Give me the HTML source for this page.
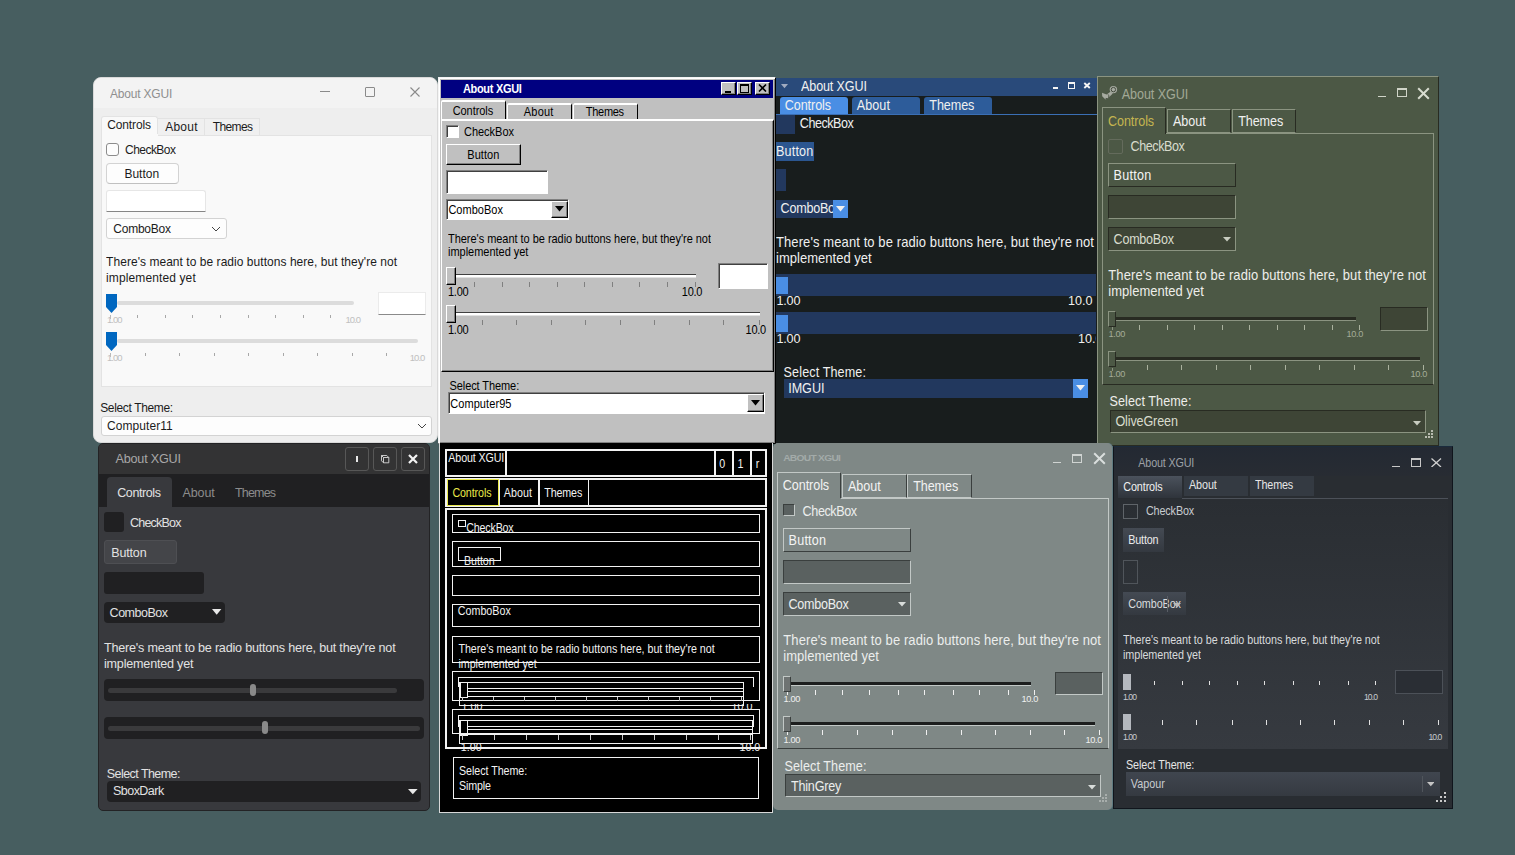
<!DOCTYPE html><html><head><meta charset="utf-8"><style>html,body{margin:0;padding:0;width:1515px;height:855px;overflow:hidden;background:#475e60}#p{position:relative;width:1515px;height:855px;overflow:hidden;font-family:"Liberation Sans",sans-serif}#p div{position:absolute;box-sizing:border-box}#p .t{white-space:nowrap}</style></head><body><div id="p"><div style="left:93px;top:77px;width:345px;height:366px;background:#eeeeee;border-radius:8px;border:1px solid #d9d9d9"></div>
<div style="left:94px;top:78px;width:343px;height:30px;background:#f3f3f3;border-radius:7px 7px 0 0"></div>
<div class="t" style="left:110.00px;top:88.00px;font-size:12px;line-height:12px;color:#8f8f8f;letter-spacing:-0.202px;transform:scaleY(1.0475);transform-origin:0 10.000px;">About XGUI</div>
<div style="left:320px;top:91px;width:10px;height:1px;background:#8a8a8a"></div>
<div style="left:365px;top:87px;width:10px;height:10px;border:1px solid #8a8a8a;border-radius:1px"></div>
<svg style="position:absolute;left:410px;top:87px;" width="10" height="10" viewBox="0 0 10 10"><path d="M0.5 0.5L9.5 9.5M9.5 0.5L0.5 9.5" stroke="#8a8a8a" stroke-width="1.1"/></svg>
<div style="left:101px;top:115.7px;width:57.4px;height:20.3px;background:#f9f9f9;border:1px solid #e3e3e3;border-bottom:none;border-radius:3px 3px 0 0"></div>
<div style="left:158.4px;top:118.3px;width:47.0px;height:17.7px;background:#f0f0f0;border:1px solid #e3e3e3;border-bottom:none;border-left:none"></div>
<div style="left:205.4px;top:118.3px;width:54.9px;height:17.7px;background:#f0f0f0;border:1px solid #e3e3e3;border-bottom:none;border-left:none"></div>
<div class="t" style="left:107.20px;top:119.00px;font-size:12px;line-height:12px;color:#1b1b1b;letter-spacing:-0.129px;transform:scaleY(1.0475);transform-origin:0 10.000px;">Controls</div>
<div class="t" style="left:165.20px;top:121.00px;font-size:12px;line-height:12px;color:#1b1b1b;letter-spacing:0.230px;transform:scaleY(1.0475);transform-origin:0 10.000px;">About</div>
<div class="t" style="left:212.80px;top:121.00px;font-size:12px;line-height:12px;color:#1b1b1b;letter-spacing:-0.644px;transform:scaleY(1.0475);transform-origin:0 10.000px;">Themes</div>
<div style="left:101px;top:135px;width:331px;height:252px;background:#f9f9f9;border:1px solid #e3e3e3"></div>
<div style="left:102px;top:134px;width:56px;height:3px;background:#f9f9f9"></div>
<div style="left:106px;top:143px;width:13px;height:13px;background:#fdfdfd;border:1px solid #8c8c8c;border-radius:3px"></div>
<div class="t" style="left:125.00px;top:144.00px;font-size:12px;line-height:12px;color:#1b1b1b;letter-spacing:-0.531px;transform:scaleY(1.0475);transform-origin:0 10.000px;">CheckBox</div>
<div style="left:106px;top:163px;width:73px;height:21px;background:#fdfdfd;border:1px solid #d3d3d3;border-bottom-color:#c0c0c0;border-radius:4px"></div>
<div class="t" style="left:124.40px;top:168.00px;font-size:12px;line-height:12px;color:#1b1b1b;letter-spacing:0.004px;transform:scaleY(1.0475);transform-origin:0 10.000px;">Button</div>
<div style="left:106px;top:190px;width:100px;height:22px;background:#ffffff;border:1px solid #e6e6e6;border-bottom:1px solid #868686;border-radius:3px 3px 0 0"></div>
<div style="left:106px;top:218px;width:121px;height:21px;background:#fdfdfd;border:1px solid #d3d3d3;border-radius:3px"></div>
<div class="t" style="left:113.30px;top:223.00px;font-size:12px;line-height:12px;color:#1b1b1b;letter-spacing:-0.234px;transform:scaleY(1.0475);transform-origin:0 10.000px;">ComboBox</div>
<svg style="position:absolute;left:211px;top:226px;" width="10" height="6" viewBox="0 0 10 6"><path d="M1 1L5 5L9 1" stroke="#444" stroke-width="1" fill="none"/></svg>
<div class="t" style="left:106.10px;top:256.00px;font-size:12px;line-height:12px;color:#1b1b1b;letter-spacing:0.041px;transform:scaleY(1.0475);transform-origin:0 10.000px;">There's meant to be radio buttons here, but they're not</div>
<div class="t" style="left:106.10px;top:272.00px;font-size:12px;line-height:12px;color:#1b1b1b;letter-spacing:0.113px;transform:scaleY(1.0475);transform-origin:0 10.000px;">implemented yet</div>
<div style="left:117px;top:301px;width:237px;height:4px;background:#dcdcdc;border-radius:2px"></div>
<svg style="position:absolute;left:106px;top:294px;" width="11" height="19" viewBox="0 0 11 19"><path d="M0 0H11V13L5.5 19L0 13Z" fill="#0067c0"/></svg>
<div style="left:137px;top:315px;width:1px;height:3px;background:#a8a8a8"></div>
<div style="left:165px;top:315px;width:1px;height:3px;background:#a8a8a8"></div>
<div style="left:192px;top:315px;width:1px;height:3px;background:#a8a8a8"></div>
<div style="left:220px;top:315px;width:1px;height:3px;background:#a8a8a8"></div>
<div style="left:248px;top:315px;width:1px;height:3px;background:#a8a8a8"></div>
<div style="left:275px;top:315px;width:1px;height:3px;background:#a8a8a8"></div>
<div style="left:303px;top:315px;width:1px;height:3px;background:#a8a8a8"></div>
<div style="left:330px;top:315px;width:1px;height:3px;background:#a8a8a8"></div>
<div style="left:110px;top:315px;width:1px;height:3.6px;background:#b8b8b8"></div>
<div class="t" style="left:107.00px;top:314.75px;font-size:9.5px;line-height:9.5px;color:#c0c0c0;letter-spacing:-0.992px;transform:scaleY(1.0291);transform-origin:0 8.250px;">1.00</div>
<div class="t" style="left:345.50px;top:314.75px;font-size:9.5px;line-height:9.5px;color:#c0c0c0;letter-spacing:-0.992px;transform:scaleY(1.0291);transform-origin:0 8.250px;">10.0</div>
<div style="left:378px;top:292px;width:48px;height:23px;background:#fff;border:1px solid #ebebeb;border-bottom:1px solid #8a8a8a"></div>
<div style="left:117px;top:339px;width:301px;height:4px;background:#dcdcdc;border-radius:2px"></div>
<svg style="position:absolute;left:106px;top:332px;" width="11" height="19" viewBox="0 0 11 19"><path d="M0 0H11V13L5.5 19L0 13Z" fill="#0067c0"/></svg>
<div style="left:145px;top:353px;width:1px;height:3px;background:#a8a8a8"></div>
<div style="left:179px;top:353px;width:1px;height:3px;background:#a8a8a8"></div>
<div style="left:214px;top:353px;width:1px;height:3px;background:#a8a8a8"></div>
<div style="left:248px;top:353px;width:1px;height:3px;background:#a8a8a8"></div>
<div style="left:283px;top:353px;width:1px;height:3px;background:#a8a8a8"></div>
<div style="left:317px;top:353px;width:1px;height:3px;background:#a8a8a8"></div>
<div style="left:352px;top:353px;width:1px;height:3px;background:#a8a8a8"></div>
<div style="left:386px;top:353px;width:1px;height:3px;background:#a8a8a8"></div>
<div style="left:110px;top:353px;width:1px;height:3.6px;background:#b8b8b8"></div>
<div class="t" style="left:107.00px;top:352.75px;font-size:9.5px;line-height:9.5px;color:#c0c0c0;letter-spacing:-0.992px;transform:scaleY(1.0291);transform-origin:0 8.250px;">1.00</div>
<div class="t" style="left:409.80px;top:352.75px;font-size:9.5px;line-height:9.5px;color:#c0c0c0;letter-spacing:-0.992px;transform:scaleY(1.0291);transform-origin:0 8.250px;">10.0</div>
<div class="t" style="left:100.20px;top:402.00px;font-size:12px;line-height:12px;color:#1b1b1b;letter-spacing:-0.347px;transform:scaleY(1.0475);transform-origin:0 10.000px;">Select Theme:</div>
<div style="left:101px;top:416px;width:331px;height:20px;background:#fdfdfd;border:1px solid #d3d3d3;border-radius:3px"></div>
<div class="t" style="left:107.00px;top:420.00px;font-size:12px;line-height:12px;color:#1b1b1b;letter-spacing:0.071px;transform:scaleY(1.0475);transform-origin:0 10.000px;">Computer11</div>
<svg style="position:absolute;left:417px;top:423px;" width="10" height="6" viewBox="0 0 10 6"><path d="M1 1L5 5L9 1" stroke="#444" stroke-width="1" fill="none"/></svg>
<div style="left:438px;top:77px;width:338px;height:367px;background:#c0c0c0;border:1px solid;border-color:#f4f4f4 #000 #000 #f4f4f4;box-shadow:inset 1px 1px #fff,inset -1px -1px #808080"></div>
<div style="left:441px;top:80px;width:332px;height:18px;background:#000080"></div>
<div class="t" style="left:462.90px;top:83.50px;font-size:11px;line-height:11px;color:#fff;font-weight:bold;letter-spacing:-0.301px;transform:scaleY(1.1427);transform-origin:0 9.500px;">About XGUI</div>
<div style="left:721px;top:82px;width:15px;height:13px;background:#c0c0c0;border:1px solid;border-color:#fff #000 #000 #fff;box-shadow:inset -1px -1px #808080"></div>
<div style="left:737px;top:82px;width:15px;height:13px;background:#c0c0c0;border:1px solid;border-color:#fff #000 #000 #fff;box-shadow:inset -1px -1px #808080"></div>
<div style="left:755px;top:82px;width:15px;height:13px;background:#c0c0c0;border:1px solid;border-color:#fff #000 #000 #fff;box-shadow:inset -1px -1px #808080"></div>
<div style="left:725px;top:91px;width:6px;height:2px;background:#000"></div>
<div style="left:740px;top:84px;width:9px;height:9px;border:1px solid #000;border-top-width:2px"></div>
<svg style="position:absolute;left:758px;top:84px;" width="9" height="8" viewBox="0 0 9 8"><path d="M1 0.5L8 7.5M8 0.5L1 7.5" stroke="#000" stroke-width="1.6"/></svg>
<div style="left:441px;top:100px;width:65px;height:19px;background:#c0c0c0;border-top:2px solid #fff;border-left:1px solid #fff;border-right:1px solid #000;border-radius:2px 2px 0 0"></div>
<div style="left:507px;top:102.6px;width:65px;height:16.4px;background:#c0c0c0;border-top:2px solid #fff;border-left:1px solid #fff;border-right:1px solid #000;border-radius:2px 2px 0 0"></div>
<div style="left:573px;top:102.6px;width:65px;height:16.4px;background:#c0c0c0;border-top:2px solid #fff;border-left:1px solid #fff;border-right:1px solid #000;border-radius:2px 2px 0 0"></div>
<div class="t" style="left:452.70px;top:105.50px;font-size:11px;line-height:11px;color:#000;letter-spacing:-0.068px;transform:scaleY(1.1427);transform-origin:0 9.500px;">Controls</div>
<div class="t" style="left:523.80px;top:106.50px;font-size:11px;line-height:11px;color:#000;letter-spacing:0.209px;transform:scaleY(1.1427);transform-origin:0 9.500px;">About</div>
<div class="t" style="left:585.80px;top:106.50px;font-size:11px;line-height:11px;color:#000;letter-spacing:-0.282px;transform:scaleY(1.1427);transform-origin:0 9.500px;">Themes</div>
<div style="left:441px;top:119px;width:333px;height:253px;border-top:2px solid #fff;border-left:1px solid #fff;border-bottom:1px solid #000;border-right:1px solid #000;box-shadow:inset -1px -1px #808080"></div>
<div style="left:446px;top:125px;width:13px;height:13px;background:#fff;border:1px solid;border-color:#808080 #fff #fff #808080;box-shadow:inset 1px 1px #404040"></div>
<div class="t" style="left:464.00px;top:126.50px;font-size:11px;line-height:11px;color:#000;letter-spacing:-0.023px;transform:scaleY(1.1427);transform-origin:0 9.500px;">CheckBox</div>
<div style="left:446px;top:144px;width:75px;height:21px;background:#c0c0c0;border:1px solid;border-color:#fff #000 #000 #fff;box-shadow:inset -1px -1px #808080"></div>
<div class="t" style="left:467.30px;top:149.50px;font-size:11px;line-height:11px;color:#000;letter-spacing:0.042px;transform:scaleY(1.1427);transform-origin:0 9.500px;">Button</div>
<div style="left:446px;top:170px;width:102px;height:24px;background:#fff;border:1px solid;border-color:#808080 #fff #fff #808080;box-shadow:inset 1px 1px #404040"></div>
<div style="left:446px;top:199px;width:123px;height:21px;background:#fff;border:1px solid;border-color:#808080 #fff #fff #808080;box-shadow:inset 1px 1px #404040"></div>
<div style="left:551px;top:201px;width:16.5px;height:17px;background:#c0c0c0;border:1px solid;border-color:#fff #000 #000 #fff;box-shadow:inset -1px -1px #808080"></div>
<svg style="position:absolute;left:555px;top:206px;" width="9" height="6" viewBox="0 0 9 6"><path d="M0 0H9L4.5 5.5Z" fill="#000"/></svg>
<div class="t" style="left:448.40px;top:204.50px;font-size:11px;line-height:11px;color:#000;letter-spacing:0.029px;transform:scaleY(1.1427);transform-origin:0 9.500px;">ComboBox</div>
<div class="t" style="left:448.00px;top:233.50px;font-size:11px;line-height:11px;color:#000;letter-spacing:-0.032px;transform:scaleY(1.1427);transform-origin:0 9.500px;">There's meant to be radio buttons here, but they're not</div>
<div class="t" style="left:448.00px;top:246.50px;font-size:11px;line-height:11px;color:#000;letter-spacing:-0.020px;transform:scaleY(1.1427);transform-origin:0 9.500px;">implemented yet</div>
<div style="left:456px;top:274px;width:240px;height:4px;background:#fff;border-top:1px solid #404040;border-bottom:1px solid #e0e0e0"></div>
<div style="left:446px;top:267px;width:10px;height:18px;background:#c0c0c0;border:1px solid;border-color:#fff #000 #000 #fff;box-shadow:inset -1px -1px #808080"></div>
<div style="left:474px;top:282px;width:1px;height:5px;background:#808080"></div>
<div style="left:502px;top:282px;width:1px;height:5px;background:#808080"></div>
<div style="left:529px;top:282px;width:1px;height:5px;background:#808080"></div>
<div style="left:557px;top:282px;width:1px;height:5px;background:#808080"></div>
<div style="left:584px;top:282px;width:1px;height:5px;background:#808080"></div>
<div style="left:612px;top:282px;width:1px;height:5px;background:#808080"></div>
<div style="left:639px;top:282px;width:1px;height:5px;background:#808080"></div>
<div style="left:667px;top:282px;width:1px;height:5px;background:#808080"></div>
<div style="left:694.5px;top:282px;width:1.0px;height:5px;background:#808080"></div>
<div class="t" style="left:448.00px;top:286.50px;font-size:11px;line-height:11px;color:#000;letter-spacing:-0.265px;transform:scaleY(1.1427);transform-origin:0 9.500px;">1.00</div>
<div class="t" style="left:681.80px;top:286.50px;font-size:11px;line-height:11px;color:#000;letter-spacing:-0.265px;transform:scaleY(1.1427);transform-origin:0 9.500px;">10.0</div>
<div style="left:718px;top:263px;width:50px;height:26px;background:#fff;border:1px solid;border-color:#808080 #fff #fff #808080;box-shadow:inset 1px 1px #404040"></div>
<div style="left:456px;top:312px;width:304px;height:4px;background:#fff;border-top:1px solid #404040;border-bottom:1px solid #e0e0e0"></div>
<div style="left:446px;top:305px;width:10px;height:18px;background:#c0c0c0;border:1px solid;border-color:#fff #000 #000 #fff;box-shadow:inset -1px -1px #808080"></div>
<div style="left:482px;top:320px;width:1px;height:5px;background:#808080"></div>
<div style="left:516px;top:320px;width:1px;height:5px;background:#808080"></div>
<div style="left:551px;top:320px;width:1px;height:5px;background:#808080"></div>
<div style="left:585px;top:320px;width:1px;height:5px;background:#808080"></div>
<div style="left:620px;top:320px;width:1px;height:5px;background:#808080"></div>
<div style="left:654px;top:320px;width:1px;height:5px;background:#808080"></div>
<div style="left:689px;top:320px;width:1px;height:5px;background:#808080"></div>
<div style="left:723px;top:320px;width:1px;height:5px;background:#808080"></div>
<div style="left:758.5px;top:320px;width:1.0px;height:5px;background:#808080"></div>
<div class="t" style="left:448.00px;top:324.50px;font-size:11px;line-height:11px;color:#000;letter-spacing:-0.265px;transform:scaleY(1.1427);transform-origin:0 9.500px;">1.00</div>
<div class="t" style="left:745.60px;top:324.50px;font-size:11px;line-height:11px;color:#000;letter-spacing:-0.265px;transform:scaleY(1.1427);transform-origin:0 9.500px;">10.0</div>
<div class="t" style="left:449.50px;top:380.50px;font-size:11px;line-height:11px;color:#000;letter-spacing:-0.086px;transform:scaleY(1.1427);transform-origin:0 9.500px;">Select Theme:</div>
<div style="left:448px;top:392px;width:317px;height:22px;background:#fff;border:1px solid;border-color:#808080 #fff #fff #808080;box-shadow:inset 1px 1px #404040"></div>
<div style="left:747px;top:394px;width:16.5px;height:18px;background:#c0c0c0;border:1px solid;border-color:#fff #000 #000 #fff;box-shadow:inset -1px -1px #808080"></div>
<svg style="position:absolute;left:751px;top:400px;" width="9" height="6" viewBox="0 0 9 6"><path d="M0 0H9L4.5 5.5Z" fill="#000"/></svg>
<div class="t" style="left:450.20px;top:398.50px;font-size:11px;line-height:11px;color:#000;letter-spacing:0.083px;transform:scaleY(1.1427);transform-origin:0 9.500px;">Computer95</div>
<div style="left:775.5px;top:78px;width:321.5px;height:365px;background:#181d1d"></div>
<div style="left:775.5px;top:78px;width:321.5px;height:18px;background:#294a7a"></div>
<svg style="position:absolute;left:781px;top:84px;" width="8" height="5" viewBox="0 0 8 5"><path d="M0 0H7L3.5 4.2Z" fill="#a0abc0"/></svg>
<div class="t" style="left:801.00px;top:80.70px;font-size:12.6px;line-height:12.6px;color:#f0f0f0;letter-spacing:-0.136px;transform:scaleY(1.1085);transform-origin:0 10.300px;">About XGUI</div>
<div style="left:1053px;top:87px;width:5.3px;height:2px;background:#f4f4f4"></div>
<div style="left:1068px;top:82px;width:7px;height:7px;border:1px solid #f4f4f4;border-top-width:2px"></div>
<svg style="position:absolute;left:1083px;top:82px;" width="8" height="7" viewBox="0 0 8 7"><path d="M1.3 1L6.8 6M6.8 1L1.3 6" stroke="#f4f4f4" stroke-width="1.9"/></svg>
<div style="left:780px;top:97.3px;width:68.2px;height:16.9px;background:#4a8ee4;border-radius:3px 3px 0 0"></div>
<div style="left:852px;top:97.3px;width:68px;height:16.9px;background:#2d5c9a;border-radius:3px 3px 0 0"></div>
<div style="left:924.4px;top:97.3px;width:67.9px;height:16.9px;background:#2d5c9a;border-radius:3px 3px 0 0"></div>
<div class="t" style="left:784.70px;top:99.70px;font-size:12.6px;line-height:12.6px;color:#f0f0f0;letter-spacing:-0.062px;transform:scaleY(1.1085);transform-origin:0 10.300px;">Controls</div>
<div class="t" style="left:856.70px;top:99.70px;font-size:12.6px;line-height:12.6px;color:#f0f0f0;letter-spacing:0.088px;transform:scaleY(1.1085);transform-origin:0 10.300px;">About</div>
<div class="t" style="left:929.30px;top:99.70px;font-size:12.6px;line-height:12.6px;color:#f0f0f0;letter-spacing:-0.077px;transform:scaleY(1.1085);transform-origin:0 10.300px;">Themes</div>
<div style="left:775.5px;top:114.2px;width:321.5px;height:1.2px;background:#3a6fb5"></div>
<div style="left:775.7px;top:115.4px;width:19.3px;height:18.6px;background:#22385e"></div>
<div class="t" style="left:799.80px;top:117.70px;font-size:12.6px;line-height:12.6px;color:#f0f0f0;letter-spacing:-0.479px;transform:scaleY(1.1085);transform-origin:0 10.300px;">CheckBox</div>
<div style="left:775.7px;top:142px;width:38.3px;height:19px;background:#2b5690"></div>
<div class="t" style="left:776.00px;top:145.70px;font-size:12.6px;line-height:12.6px;color:#f0f0f0;letter-spacing:0.177px;transform:scaleY(1.1085);transform-origin:0 10.300px;">Button</div>
<div style="left:775.7px;top:169px;width:10.3px;height:22px;background:#22385e"></div>
<div style="left:775.7px;top:200px;width:72.3px;height:18px;background:#22385e"></div>
<div class="t" style="left:780.60px;top:202.70px;font-size:12.6px;line-height:12.6px;color:#f0f0f0;letter-spacing:-0.258px;transform:scaleY(1.1085);transform-origin:0 10.300px;">ComboBox</div>
<div style="left:833px;top:200px;width:15px;height:18px;background:#4a8ee4"></div>
<svg style="position:absolute;left:836px;top:206px;" width="9" height="6" viewBox="0 0 9 6"><path d="M0 0H9L4.5 5.5Z" fill="#f0f0f0"/></svg>
<div class="t" style="left:776.00px;top:236.00px;font-size:13px;line-height:13px;color:#f0f0f0;letter-spacing:0.095px;transform:scaleY(1.0743);transform-origin:0 11.000px;">There's meant to be radio buttons here, but they're not</div>
<div class="t" style="left:776.00px;top:252.00px;font-size:13px;line-height:13px;color:#f0f0f0;letter-spacing:0.025px;transform:scaleY(1.0743);transform-origin:0 11.000px;">implemented yet</div>
<div style="left:775.7px;top:274px;width:320.6px;height:21.7px;background:#22385e"></div>
<div style="left:775.7px;top:277px;width:12.5px;height:17px;background:#4a8ee4"></div>
<div style="left:775.7px;top:312px;width:320.6px;height:21.7px;background:#22385e"></div>
<div style="left:775.7px;top:315px;width:12.5px;height:17px;background:#4a8ee4"></div>
<div class="t" style="left:776.50px;top:294.70px;font-size:12.6px;line-height:12.6px;color:#f0f0f0;letter-spacing:-0.202px;transform:scaleY(0.9976);transform-origin:0 10.300px;">1.00</div>
<div class="t" style="left:1068.00px;top:294.70px;font-size:12.6px;line-height:12.6px;color:#f0f0f0;letter-spacing:0.031px;transform:scaleY(0.9976);transform-origin:0 10.300px;">10.0</div>
<div class="t" style="left:776.50px;top:332.70px;font-size:12.6px;line-height:12.6px;color:#f0f0f0;letter-spacing:-0.202px;transform:scaleY(0.9976);transform-origin:0 10.300px;">1.00</div>
<div style="left:1068px;top:330px;width:27.5px;height:16px;overflow:hidden"><div style="left:-1068px;top:-330px;width:1515px;height:855px">
<div class="t" style="left:1078.00px;top:332.70px;font-size:12.6px;line-height:12.6px;color:#f0f0f0;letter-spacing:0.031px;transform:scaleY(0.9976);transform-origin:0 10.300px;">10.0</div>
</div></div>
<div class="t" style="left:783.60px;top:366.70px;font-size:12.6px;line-height:12.6px;color:#f0f0f0;letter-spacing:0.115px;transform:scaleY(1.1085);transform-origin:0 10.300px;">Select Theme:</div>
<div style="left:784px;top:379px;width:303.7px;height:18.8px;background:#22385e"></div>
<div style="left:1073px;top:379px;width:14.7px;height:18.8px;background:#4a8ee4"></div>
<svg style="position:absolute;left:1076px;top:385px;" width="9" height="6" viewBox="0 0 9 6"><path d="M0 0H9L4.5 5.5Z" fill="#f0f0f0"/></svg>
<div class="t" style="left:788.20px;top:382.70px;font-size:12.6px;line-height:12.6px;color:#f0f0f0;letter-spacing:-0.029px;transform:scaleY(1.1085);transform-origin:0 10.300px;">IMGUI</div>
<div style="left:1097px;top:76px;width:342px;height:370px;background:#4c5845;border-top:1px solid #8b9481;border-left:1px solid #8b9481;border-right:1px solid #282b22;border-bottom:1px solid #282b22"></div>
<svg style="position:absolute;left:1098px;top:82px;" width="24" height="22" viewBox="0 0 24 22"><circle cx="15.4" cy="7.6" r="3.7" fill="#a6aaa0"/><circle cx="15.4" cy="7.6" r="2.2" fill="none" stroke="#454d3f" stroke-width="1"/><path d="M4 10.8L8.6 12.4L12.4 9.8L14.8 11.4L11.2 15Q9.8 17.6 7.2 17.2L4.2 14.2Z" fill="#a6aaa0"/><path d="M9.6 12.2A2.2 2.2 0 0 1 7.6 16.4" stroke="#454d3f" stroke-width="0.9" fill="none"/></svg>
<div class="t" style="left:1121.80px;top:88.70px;font-size:12.6px;line-height:12.6px;color:#a2a896;letter-spacing:-0.091px;transform:scaleY(1.1085);transform-origin:0 10.300px;">About XGUI</div>
<div style="left:1378px;top:96px;width:8px;height:1.3px;background:#d0d4c8"></div>
<div style="left:1397px;top:88px;width:10px;height:9px;border:1px solid #d0d4c8;border-top-width:2px"></div>
<svg style="position:absolute;left:1417px;top:86.5px;" width="13" height="13" viewBox="0 0 13 13"><path d="M1.2 1.2L11.8 11.8M11.8 1.2L1.2 11.8" stroke="#d8dcd0" stroke-width="2"/></svg>
<div style="left:1102px;top:107px;width:64px;height:27px;border-top:1px solid #8b9481;border-left:1px solid #8b9481;border-right:1px solid #282b22;background:#4c5845"></div>
<div style="left:1166.5px;top:109.3px;width:64.5px;height:23.7px;border:1px solid #8b9481;border-right-color:#282b22"></div>
<div style="left:1231.5px;top:109.3px;width:64.5px;height:23.7px;border:1px solid #8b9481;border-right-color:#282b22"></div>
<div class="t" style="left:1108.00px;top:115.70px;font-size:12.6px;line-height:12.6px;color:#c4b550;letter-spacing:-0.105px;transform:scaleY(1.1085);transform-origin:0 10.300px;">Controls</div>
<div class="t" style="left:1172.90px;top:115.70px;font-size:12.6px;line-height:12.6px;color:#f0f0f0;letter-spacing:0.013px;transform:scaleY(1.1085);transform-origin:0 10.300px;">About</div>
<div class="t" style="left:1238.20px;top:115.70px;font-size:12.6px;line-height:12.6px;color:#f0f0f0;letter-spacing:-0.097px;transform:scaleY(1.1085);transform-origin:0 10.300px;">Themes</div>
<div style="left:1102px;top:133px;width:332px;height:252px;border-left:1px solid #8b9481;border-bottom:1px solid #282b22;border-right:1px solid #8b9481"></div>
<div style="left:1166px;top:133px;width:268px;height:1.2px;background:#8b9481"></div>
<div style="left:1108px;top:139.2px;width:15px;height:14.5px;border:1px solid #646b5c;border-radius:2px"></div>
<div class="t" style="left:1130.60px;top:140.70px;font-size:12.6px;line-height:12.6px;color:#d8dccd;letter-spacing:-0.451px;transform:scaleY(1.1085);transform-origin:0 10.300px;">CheckBox</div>
<div style="left:1108px;top:163px;width:128px;height:23.6px;border:1px solid;border-color:#8b9481 #282b22 #282b22 #8b9481"></div>
<div class="t" style="left:1113.60px;top:169.70px;font-size:12.6px;line-height:12.6px;color:#f4f4f4;letter-spacing:0.237px;transform:scaleY(1.1085);transform-origin:0 10.300px;">Button</div>
<div style="left:1108px;top:195px;width:128px;height:23.8px;background:#3e4536;border:1px solid;border-color:#282b22 #8b9481 #8b9481 #282b22"></div>
<div style="left:1108px;top:227px;width:128px;height:23.8px;background:#3e4536;border:1px solid;border-color:#282b22 #8b9481 #8b9481 #282b22"></div>
<div class="t" style="left:1113.60px;top:233.70px;font-size:12.6px;line-height:12.6px;color:#d8dccd;letter-spacing:-0.272px;transform:scaleY(1.1085);transform-origin:0 10.300px;">ComboBox</div>
<svg style="position:absolute;left:1222.5px;top:237px;" width="8" height="5" viewBox="0 0 8 5"><path d="M0 0H8L4 4.5Z" fill="#c8ccc0"/></svg>
<div class="t" style="left:1108.30px;top:269.00px;font-size:13px;line-height:13px;color:#eeeeea;letter-spacing:0.090px;transform:scaleY(1.0743);transform-origin:0 11.000px;">There's meant to be radio buttons here, but they're not</div>
<div class="t" style="left:1108.30px;top:285.00px;font-size:13px;line-height:13px;color:#eeeeea;letter-spacing:0.010px;transform:scaleY(1.0743);transform-origin:0 11.000px;">implemented yet</div>
<div style="left:1116px;top:316.8px;width:240px;height:3.0px;background:#282b22"></div>
<div style="left:1116px;top:319.8px;width:240px;height:1.2px;background:#8b9481"></div>
<div style="left:1108px;top:310.5px;width:8px;height:16.0px;background:#4c5845;border:1px solid;border-color:#8b9481 #282b22 #282b22 #8b9481"></div>
<div style="left:1112px;top:327.0px;width:1px;height:3.0px;background:#8b9481"></div>
<div style="left:1139px;top:324.8px;width:1px;height:5.2px;background:#aab29e"></div>
<div style="left:1167px;top:324.8px;width:1px;height:5.2px;background:#aab29e"></div>
<div style="left:1194px;top:324.8px;width:1px;height:5.2px;background:#aab29e"></div>
<div style="left:1222px;top:324.8px;width:1px;height:5.2px;background:#aab29e"></div>
<div style="left:1249px;top:324.8px;width:1px;height:5.2px;background:#aab29e"></div>
<div style="left:1277px;top:324.8px;width:1px;height:5.2px;background:#aab29e"></div>
<div style="left:1304px;top:324.8px;width:1px;height:5.2px;background:#aab29e"></div>
<div style="left:1332px;top:324.8px;width:1px;height:5.2px;background:#aab29e"></div>
<div style="left:1359px;top:324.8px;width:1px;height:5.2px;background:#aab29e"></div>
<div class="t" style="left:1108.60px;top:330.40px;font-size:9.2px;line-height:9.2px;color:#a4ac98;letter-spacing:-0.398px;transform:scaleY(1.0627);transform-origin:0 7.600px;">1.00</div>
<div class="t" style="left:1346.50px;top:330.40px;font-size:9.2px;line-height:9.2px;color:#a4ac98;letter-spacing:-0.331px;transform:scaleY(1.0627);transform-origin:0 7.600px;">10.0</div>
<div style="left:1380px;top:307px;width:48px;height:24px;background:#3e4536;border:1px solid;border-color:#282b22 #8b9481 #8b9481 #282b22"></div>
<div style="left:1116px;top:357.3px;width:304px;height:3.0px;background:#282b22"></div>
<div style="left:1116px;top:360.3px;width:304px;height:1.2px;background:#8b9481"></div>
<div style="left:1108px;top:351px;width:8px;height:16px;background:#4c5845;border:1px solid;border-color:#8b9481 #282b22 #282b22 #8b9481"></div>
<div style="left:1112px;top:367.5px;width:1px;height:3.0px;background:#8b9481"></div>
<div style="left:1147px;top:365.3px;width:1px;height:5.2px;background:#aab29e"></div>
<div style="left:1181px;top:365.3px;width:1px;height:5.2px;background:#aab29e"></div>
<div style="left:1216px;top:365.3px;width:1px;height:5.2px;background:#aab29e"></div>
<div style="left:1250px;top:365.3px;width:1px;height:5.2px;background:#aab29e"></div>
<div style="left:1285px;top:365.3px;width:1px;height:5.2px;background:#aab29e"></div>
<div style="left:1319px;top:365.3px;width:1px;height:5.2px;background:#aab29e"></div>
<div style="left:1354px;top:365.3px;width:1px;height:5.2px;background:#aab29e"></div>
<div style="left:1388px;top:365.3px;width:1px;height:5.2px;background:#aab29e"></div>
<div style="left:1423px;top:365.3px;width:1px;height:5.2px;background:#aab29e"></div>
<div class="t" style="left:1108.60px;top:370.40px;font-size:9.2px;line-height:9.2px;color:#a4ac98;letter-spacing:-0.398px;transform:scaleY(1.0627);transform-origin:0 7.600px;">1.00</div>
<div class="t" style="left:1410.40px;top:370.40px;font-size:9.2px;line-height:9.2px;color:#a4ac98;letter-spacing:-0.331px;transform:scaleY(1.0627);transform-origin:0 7.600px;">10.0</div>
<div class="t" style="left:1109.50px;top:395.70px;font-size:12.6px;line-height:12.6px;color:#eeeeea;letter-spacing:0.082px;transform:scaleY(1.1085);transform-origin:0 10.300px;">Select Theme:</div>
<div style="left:1110px;top:410px;width:316px;height:23px;background:#3e4536;border:1px solid;border-color:#282b22 #8b9481 #8b9481 #282b22"></div>
<div class="t" style="left:1115.40px;top:415.70px;font-size:12.6px;line-height:12.6px;color:#d8dccd;letter-spacing:-0.128px;transform:scaleY(1.1085);transform-origin:0 10.300px;">OliveGreen</div>
<svg style="position:absolute;left:1412.5px;top:421px;" width="8" height="5" viewBox="0 0 8 5"><path d="M0 0H8L4 4.5Z" fill="#c8ccc0"/></svg>
<div style="left:1431px;top:430px;width:2px;height:2px;background:#b8bcb0"></div>
<div style="left:1428px;top:433px;width:2px;height:2px;background:#b8bcb0"></div>
<div style="left:1431px;top:433px;width:2px;height:2px;background:#b8bcb0"></div>
<div style="left:1425px;top:436px;width:2px;height:2px;background:#b8bcb0"></div>
<div style="left:1428px;top:436px;width:2px;height:2px;background:#b8bcb0"></div>
<div style="left:1431px;top:436px;width:2px;height:2px;background:#b8bcb0"></div>
<div style="left:98px;top:443.3px;width:332px;height:367.7px;background:#38393d;border-radius:5px;border:1px solid #232325;overflow:hidden"></div>
<div style="left:99px;top:444.3px;width:330px;height:29.7px;background:#333334;border-radius:4px 4px 0 0"></div>
<div style="left:99px;top:474px;width:330px;height:33px;background:#202022"></div>
<div class="t" style="left:115.50px;top:452.50px;font-size:12.6px;line-height:12.6px;color:#a8a8a8;letter-spacing:-0.191px;">About XGUI</div>
<div style="left:345.2px;top:447.2px;width:23.5px;height:23.8px;border:1px solid #575757;border-radius:3px;background:#333334"></div>
<div style="left:373px;top:447.2px;width:23.5px;height:23.8px;border:1px solid #575757;border-radius:3px;background:#333334"></div>
<div style="left:401.2px;top:447.2px;width:23.5px;height:23.8px;border:1px solid #575757;border-radius:3px;background:#333334"></div>
<div style="left:356px;top:456px;width:2px;height:6px;background:#e8e8e8"></div>
<svg style="position:absolute;left:376px;top:450px;" width="18" height="18" viewBox="0 0 18 18"><path d="M5.5 5.5H10.8L12.8 7.5V12.8H7.5L5.5 10.8Z M5.5 5.5L7.5 7.5H12.8 M7.5 7.5V12.8" fill="none" stroke="#d8d8d8" stroke-width="0.9"/></svg>
<svg style="position:absolute;left:408px;top:454px;" width="10" height="10" viewBox="0 0 10 10"><path d="M1 1L9 9M9 1L1 9" stroke="#f4f4f4" stroke-width="2.2"/></svg>
<div style="left:106.7px;top:477.2px;width:65.3px;height:29.8px;background:#38393d;border-radius:4px 4px 0 0"></div>
<div class="t" style="left:117.20px;top:486.75px;font-size:12.5px;line-height:12.5px;color:#e2e2e2;letter-spacing:-0.395px;">Controls</div>
<div class="t" style="left:182.40px;top:486.75px;font-size:12.5px;line-height:12.5px;color:#8c8c8c;letter-spacing:-0.072px;">About</div>
<div class="t" style="left:235.00px;top:486.75px;font-size:12.5px;line-height:12.5px;color:#8c8c8c;letter-spacing:-0.825px;">Themes</div>
<div style="left:104px;top:512px;width:20px;height:20px;background:#202022;border-radius:3px"></div>
<div class="t" style="left:130.10px;top:516.85px;font-size:12.5px;line-height:12.5px;color:#e2e2e2;letter-spacing:-0.800px;">CheckBox</div>
<div style="left:104px;top:540px;width:73px;height:24px;background:#444549;border:1px solid #4e4f53;border-radius:3px"></div>
<div class="t" style="left:111.30px;top:546.75px;font-size:12.5px;line-height:12.5px;color:#e2e2e2;letter-spacing:-0.165px;">Button</div>
<div style="left:104px;top:572px;width:100px;height:22px;background:#202022;border-radius:3px"></div>
<div style="left:104px;top:602px;width:121px;height:20.6px;background:#202022;border-radius:4px"></div>
<div class="t" style="left:109.60px;top:607.25px;font-size:12.5px;line-height:12.5px;color:#e2e2e2;letter-spacing:-0.488px;">ComboBox</div>
<svg style="position:absolute;left:212.4px;top:609.4px;" width="10" height="6" viewBox="0 0 10 6"><path d="M0 0H9.4L4.7 5.8Z" fill="#e8e8e8"/></svg>
<div class="t" style="left:104.00px;top:642.00px;font-size:12.6px;line-height:12.6px;color:#e2e2e2;letter-spacing:-0.211px;">There's meant to be radio buttons here, but they're not</div>
<div class="t" style="left:104.00px;top:657.70px;font-size:12.6px;line-height:12.6px;color:#e2e2e2;letter-spacing:-0.209px;">implemented yet</div>
<div style="left:104px;top:679.2px;width:320px;height:21.5px;background:#202022;border-radius:4px"></div>
<div style="left:108px;top:687.9px;width:289px;height:5.1px;background:#3a3a3c;border-radius:3px"></div>
<div style="left:250px;top:683.6px;width:5.5px;height:12.4px;background:#8a8a8a;border-radius:3px"></div>
<div style="left:104px;top:717px;width:320px;height:21.5px;background:#202022;border-radius:4px"></div>
<div style="left:108px;top:725.7px;width:312px;height:5.1px;background:#3a3a3c;border-radius:3px"></div>
<div style="left:262px;top:721.4px;width:5.5px;height:12.4px;background:#8a8a8a;border-radius:3px"></div>
<div class="t" style="left:106.80px;top:768.15px;font-size:12.5px;line-height:12.5px;color:#e2e2e2;letter-spacing:-0.556px;">Select Theme:</div>
<div style="left:106.8px;top:781.4px;width:313.8px;height:20.6px;background:#202022;border-radius:4px"></div>
<div class="t" style="left:113.00px;top:785.25px;font-size:12.5px;line-height:12.5px;color:#e2e2e2;letter-spacing:-0.534px;">SboxDark</div>
<svg style="position:absolute;left:408px;top:789px;" width="10" height="6" viewBox="0 0 10 6"><path d="M0 0H9.6L4.8 5.3Z" fill="#e8e8e8"/></svg>
<div style="left:439px;top:443px;width:334px;height:370px;background:#000;border:1px solid #d8d8d8;border-top:none"></div>
<div style="left:445.4px;top:449px;width:321.6px;height:28.4px;border:2px solid #f2f2f2;"></div>
<div style="left:505px;top:449px;width:1.5px;height:28.4px;background:#f2f2f2"></div>
<div class="t" style="left:448.30px;top:452.65px;font-size:10.7px;line-height:10.7px;color:#f2f2f2;letter-spacing:-0.120px;transform:scaleY(1.1748);transform-origin:0 9.350px;">About XGUI</div>
<div style="left:714px;top:449px;width:2px;height:28.4px;background:#f2f2f2"></div>
<div class="t" style="left:719.20px;top:458.65px;font-size:10.7px;line-height:10.7px;color:#f2f2f2;transform:scaleY(1.1748);transform-origin:0 9.350px;">0</div>
<div style="left:732px;top:449px;width:2px;height:28.4px;background:#f2f2f2"></div>
<div class="t" style="left:737.50px;top:458.65px;font-size:10.7px;line-height:10.7px;color:#f2f2f2;transform:scaleY(1.1748);transform-origin:0 9.350px;">1</div>
<div style="left:750px;top:449px;width:2px;height:28.4px;background:#f2f2f2"></div>
<div class="t" style="left:755.80px;top:458.65px;font-size:10.7px;line-height:10.7px;color:#f2f2f2;transform:scaleY(1.1748);transform-origin:0 9.350px;">r</div>
<div style="left:445.4px;top:478px;width:321.6px;height:29px;border:2px solid #f2f2f2;"></div>
<div style="left:446.5px;top:479.2px;width:52.1px;height:26.6px;border:1.5px solid #e8e84a;"></div>
<div class="t" style="left:452.40px;top:487.65px;font-size:10.7px;line-height:10.7px;color:#e8e84a;letter-spacing:-0.094px;transform:scaleY(1.1748);transform-origin:0 9.350px;">Controls</div>
<div style="left:498.6px;top:479.2px;width:40.0px;height:26.6px;border:1.5px solid #f2f2f2;"></div>
<div class="t" style="left:503.80px;top:487.65px;font-size:10.7px;line-height:10.7px;color:#f2f2f2;letter-spacing:0.055px;transform:scaleY(1.1748);transform-origin:0 9.350px;">About</div>
<div style="left:538.6px;top:479.2px;width:50.4px;height:26.6px;border:1.5px solid #f2f2f2;"></div>
<div class="t" style="left:544.30px;top:487.65px;font-size:10.7px;line-height:10.7px;color:#f2f2f2;letter-spacing:-0.125px;transform:scaleY(1.1748);transform-origin:0 9.350px;">Themes</div>
<div style="left:445.4px;top:508.4px;width:321.6px;height:240.6px;border:2px solid #f2f2f2;"></div>
<div style="left:452.4px;top:513.7px;width:307.6px;height:18.9px;border:1.5px solid #f2f2f2;"></div>
<div style="left:458.2px;top:520.1px;width:7.6px;height:7.0px;border:1.5px solid #f2f2f2;"></div>
<div class="t" style="left:466.20px;top:522.65px;font-size:10.7px;line-height:10.7px;color:#f2f2f2;letter-spacing:-0.170px;transform:scaleY(1.1748);transform-origin:0 9.350px;">CheckBox</div>
<div style="left:452.4px;top:541.3px;width:307.6px;height:25.3px;border:1.5px solid #f2f2f2;"></div>
<div style="left:457.8px;top:547px;width:43.7px;height:14px;border:1.5px solid #f2f2f2;"></div>
<div class="t" style="left:464.00px;top:555.65px;font-size:10.7px;line-height:10.7px;color:#f2f2f2;letter-spacing:-0.045px;transform:scaleY(1.1748);transform-origin:0 9.350px;">Button</div>
<div style="left:452.4px;top:575px;width:307.6px;height:20.8px;border:1.5px solid #f2f2f2;"></div>
<div style="left:452.4px;top:604px;width:307.6px;height:22.5px;border:1.5px solid #f2f2f2;"></div>
<div class="t" style="left:457.80px;top:605.65px;font-size:10.7px;line-height:10.7px;color:#f2f2f2;letter-spacing:0.013px;transform:scaleY(1.1748);transform-origin:0 9.350px;">ComboBox</div>
<div style="left:452.4px;top:635.7px;width:307.6px;height:27.3px;border:1.5px solid #f2f2f2;"></div>
<div class="t" style="left:458.40px;top:643.65px;font-size:10.7px;line-height:10.7px;color:#f2f2f2;letter-spacing:-0.017px;transform:scaleY(1.1748);transform-origin:0 9.350px;">There's meant to be radio buttons here, but they're not</div>
<div class="t" style="left:458.40px;top:658.65px;font-size:10.7px;line-height:10.7px;color:#f2f2f2;letter-spacing:-0.006px;transform:scaleY(1.1748);transform-origin:0 9.350px;">implemented yet</div>
<div style="left:452px;top:671px;width:308px;height:30px;border:1px solid #f2f2f2;"></div>
<div style="left:458px;top:677px;width:296px;height:1px;background:#f2f2f2"></div>
<div style="left:458px;top:677px;width:1px;height:10px;background:#f2f2f2"></div>
<div style="left:753px;top:677px;width:1px;height:10px;background:#f2f2f2"></div>
<div style="left:459px;top:682px;width:285px;height:1px;background:#f2f2f2"></div>
<div style="left:459px;top:682px;width:1px;height:24px;background:#f2f2f2"></div>
<div style="left:743px;top:682px;width:1px;height:24px;background:#f2f2f2"></div>
<div style="left:467px;top:688px;width:276px;height:1px;background:#f2f2f2"></div>
<div style="left:467px;top:691px;width:276px;height:1px;background:#f2f2f2"></div>
<div style="left:467px;top:696px;width:277px;height:1px;background:#f2f2f2"></div>
<div style="left:460px;top:682px;width:8px;height:16px;border:1px solid #f2f2f2;"></div>
<div style="left:462px;top:697px;width:1px;height:4px;background:#c8c8c8"></div>
<div style="left:493px;top:697px;width:1px;height:4px;background:#c8c8c8"></div>
<div style="left:524px;top:697px;width:1px;height:4px;background:#c8c8c8"></div>
<div style="left:555px;top:697px;width:1px;height:4px;background:#c8c8c8"></div>
<div style="left:586px;top:697px;width:1px;height:4px;background:#c8c8c8"></div>
<div style="left:617px;top:697px;width:1px;height:4px;background:#c8c8c8"></div>
<div style="left:648px;top:697px;width:1px;height:4px;background:#c8c8c8"></div>
<div style="left:679px;top:697px;width:1px;height:4px;background:#c8c8c8"></div>
<div style="left:710px;top:697px;width:1px;height:4px;background:#c8c8c8"></div>
<div style="left:741px;top:697px;width:1px;height:4px;background:#c8c8c8"></div>
<div style="left:459px;top:705px;width:285px;height:1px;background:#f2f2f2"></div>
<div style="left:446px;top:704px;width:320px;height:5.7px;overflow:hidden"><div class="t" style="left:15.6px;top:-2.7px;font-size:10.7px;line-height:10.7px;color:#f2f2f2">1.00</div><div class="t" style="left:285.6px;top:-2.7px;font-size:10.7px;line-height:10.7px;color:#f2f2f2">10.0</div></div>
<div style="left:452px;top:709px;width:308px;height:25px;border:1px solid #f2f2f2;"></div>
<div style="left:458px;top:715px;width:296px;height:1px;background:#f2f2f2"></div>
<div style="left:458px;top:715px;width:1px;height:12px;background:#f2f2f2"></div>
<div style="left:753px;top:715px;width:1px;height:12px;background:#f2f2f2"></div>
<div style="left:459px;top:720px;width:294px;height:1px;background:#f2f2f2"></div>
<div style="left:459px;top:720px;width:1px;height:24px;background:#f2f2f2"></div>
<div style="left:752px;top:720px;width:1px;height:24px;background:#f2f2f2"></div>
<div style="left:467px;top:726px;width:286px;height:1px;background:#f2f2f2"></div>
<div style="left:467px;top:729px;width:286px;height:1px;background:#f2f2f2"></div>
<div style="left:459px;top:734px;width:294px;height:1px;background:#f2f2f2"></div>
<div style="left:460px;top:720px;width:8px;height:16px;border:1px solid #f2f2f2;"></div>
<div style="left:462px;top:735px;width:1px;height:5px;background:#c8c8c8"></div>
<div style="left:494px;top:735px;width:1px;height:5px;background:#c8c8c8"></div>
<div style="left:526px;top:735px;width:1px;height:5px;background:#c8c8c8"></div>
<div style="left:558px;top:735px;width:1px;height:5px;background:#c8c8c8"></div>
<div style="left:590px;top:735px;width:1px;height:5px;background:#c8c8c8"></div>
<div style="left:622px;top:735px;width:1px;height:5px;background:#c8c8c8"></div>
<div style="left:654px;top:735px;width:1px;height:5px;background:#c8c8c8"></div>
<div style="left:686px;top:735px;width:1px;height:5px;background:#c8c8c8"></div>
<div style="left:718px;top:735px;width:1px;height:5px;background:#c8c8c8"></div>
<div style="left:750px;top:735px;width:1px;height:5px;background:#c8c8c8"></div>
<div style="left:459px;top:743px;width:294px;height:1px;background:#f2f2f2"></div>
<div class="t" style="left:460.8px;top:741.5px;font-size:10.7px;line-height:10.7px;color:#f2f2f2">1.00</div>
<div class="t" style="left:739.5px;top:741.5px;font-size:10.7px;line-height:10.7px;color:#f2f2f2">10.0</div>
<div style="left:453px;top:757px;width:306px;height:42px;border:1.5px solid #f2f2f2;"></div>
<div class="t" style="left:459.00px;top:765.65px;font-size:10.7px;line-height:10.7px;color:#f2f2f2;letter-spacing:-0.042px;transform:scaleY(1.1748);transform-origin:0 9.350px;">Select Theme:</div>
<div class="t" style="left:459.00px;top:780.65px;font-size:10.7px;line-height:10.7px;color:#f2f2f2;letter-spacing:-0.138px;transform:scaleY(1.1748);transform-origin:0 9.350px;">Simple</div>
<div style="left:773.2px;top:443px;width:338.8px;height:367px;background:#7f8886;border-radius:5px;box-shadow:1px 0 0 #5f7a80"></div>
<div class="t" style="left:783.20px;top:453.40px;font-size:10.2px;line-height:10.2px;color:#a3aba9;font-weight:bold;letter-spacing:-0.695px;transform:scaleY(0.9585);transform-origin:0 8.600px;">ABOUT XGUI</div>
<div style="left:1053px;top:461.5px;width:8.3px;height:1.7px;background:#d0d4d2"></div>
<div style="left:1072px;top:454px;width:10px;height:9px;border:1px solid #d0d4d2;border-top-width:2px"></div>
<svg style="position:absolute;left:1092.5px;top:452.2px;" width="13" height="13" viewBox="0 0 13 13"><path d="M1.2 1.2L11.8 11.8M11.8 1.2L1.2 11.8" stroke="#dadedd" stroke-width="2"/></svg>
<div style="left:777.2px;top:472.1px;width:63.8px;height:26.4px;border-top:1px solid #c2c8c6;border-left:1px solid #c2c8c6;border-right:1px solid #3a3f3e;background:#7f8886"></div>
<div style="left:842px;top:474.2px;width:64.5px;height:24.3px;border:1px solid #c2c8c6;border-right-color:#3a3f3e"></div>
<div style="left:907px;top:474.2px;width:64.5px;height:24.3px;border:1px solid #c2c8c6;border-right-color:#3a3f3e"></div>
<div class="t" style="left:782.80px;top:479.70px;font-size:12.6px;line-height:12.6px;color:#f2f2f2;letter-spacing:-0.076px;transform:scaleY(1.1085);transform-origin:0 10.300px;">Controls</div>
<div class="t" style="left:847.90px;top:480.70px;font-size:12.6px;line-height:12.6px;color:#f2f2f2;letter-spacing:0.013px;transform:scaleY(1.1085);transform-origin:0 10.300px;">About</div>
<div class="t" style="left:913.20px;top:480.70px;font-size:12.6px;line-height:12.6px;color:#f2f2f2;letter-spacing:-0.097px;transform:scaleY(1.1085);transform-origin:0 10.300px;">Themes</div>
<div style="left:777.2px;top:498px;width:331.8px;height:251px;border-left:1px solid #c2c8c6;border-bottom:1px solid #3a3f3e;border-right:1px solid #c2c8c6"></div>
<div style="left:841px;top:498px;width:268px;height:1px;background:#c2c8c6"></div>
<div style="left:783.2px;top:504px;width:11.8px;height:11.8px;background:#5a6160;border:1px solid;border-color:#3a3f3e #c2c8c6 #c2c8c6 #3a3f3e"></div>
<div class="t" style="left:802.60px;top:505.70px;font-size:12.6px;line-height:12.6px;color:#eceeed;letter-spacing:-0.408px;transform:scaleY(1.1085);transform-origin:0 10.300px;">CheckBox</div>
<div style="left:783.2px;top:528px;width:127.8px;height:23.8px;border:1px solid;border-color:#c2c8c6 #3a3f3e #3a3f3e #c2c8c6"></div>
<div class="t" style="left:788.50px;top:534.70px;font-size:12.6px;line-height:12.6px;color:#f4f4f4;letter-spacing:0.237px;transform:scaleY(1.1085);transform-origin:0 10.300px;">Button</div>
<div style="left:783.2px;top:560px;width:127.8px;height:24px;background:#5a6160;border:1px solid;border-color:#3a3f3e #c2c8c6 #c2c8c6 #3a3f3e"></div>
<div style="left:783.2px;top:592px;width:127.8px;height:24px;background:#5a6160;border:1px solid;border-color:#3a3f3e #c2c8c6 #c2c8c6 #3a3f3e"></div>
<div class="t" style="left:788.50px;top:598.70px;font-size:12.6px;line-height:12.6px;color:#eceeed;letter-spacing:-0.272px;transform:scaleY(1.1085);transform-origin:0 10.300px;">ComboBox</div>
<svg style="position:absolute;left:897.7px;top:602px;" width="8" height="5" viewBox="0 0 8 5"><path d="M0 0H8L4 4.5Z" fill="#d8dcda"/></svg>
<div class="t" style="left:783.30px;top:634.00px;font-size:13px;line-height:13px;color:#eceeed;letter-spacing:0.090px;transform:scaleY(1.0743);transform-origin:0 11.000px;">There's meant to be radio buttons here, but they're not</div>
<div class="t" style="left:783.30px;top:650.00px;font-size:13px;line-height:13px;color:#eceeed;letter-spacing:0.010px;transform:scaleY(1.0743);transform-origin:0 11.000px;">implemented yet</div>
<div style="left:791px;top:681.6px;width:240px;height:3.1px;background:#1c1e1e"></div>
<div style="left:791px;top:684.7px;width:240px;height:1.4px;background:#c2c8c6"></div>
<div style="left:782.9px;top:675.8px;width:7.9px;height:15.8px;background:#6e7372;border:1px solid;border-color:#c2c8c6 #3a3f3e #3a3f3e #c2c8c6"></div>
<div style="left:787.2px;top:691.8px;width:1.0px;height:3.0px;background:#f0f0f0"></div>
<div style="left:814.5px;top:690.0px;width:1.0px;height:4.8px;background:#f0f0f0"></div>
<div style="left:842.4px;top:690.0px;width:1.0px;height:4.8px;background:#f0f0f0"></div>
<div style="left:869.4px;top:690.0px;width:1.0px;height:4.8px;background:#f0f0f0"></div>
<div style="left:897.5px;top:690.0px;width:1.0px;height:4.8px;background:#f0f0f0"></div>
<div style="left:924.4px;top:690.0px;width:1.0px;height:4.8px;background:#f0f0f0"></div>
<div style="left:952.5px;top:690.0px;width:1.0px;height:4.8px;background:#f0f0f0"></div>
<div style="left:979.4px;top:690.0px;width:1.0px;height:4.8px;background:#f0f0f0"></div>
<div style="left:1007.5px;top:690.0px;width:1.0px;height:4.8px;background:#f0f0f0"></div>
<div style="left:1034.4px;top:690.0px;width:1.0px;height:4.8px;background:#f0f0f0"></div>
<div class="t" style="left:783.60px;top:695.40px;font-size:9.2px;line-height:9.2px;color:#f0f0f0;letter-spacing:-0.398px;transform:scaleY(1.0627);transform-origin:0 7.600px;">1.00</div>
<div class="t" style="left:1021.50px;top:695.40px;font-size:9.2px;line-height:9.2px;color:#f0f0f0;letter-spacing:-0.331px;transform:scaleY(1.0627);transform-origin:0 7.600px;">10.0</div>
<div style="left:1055px;top:672px;width:48px;height:23.3px;background:#5a6160;border:1px solid;border-color:#3a3f3e #c2c8c6 #c2c8c6 #3a3f3e"></div>
<div style="left:791px;top:721.8px;width:304px;height:3.1px;background:#1c1e1e"></div>
<div style="left:791px;top:724.9px;width:304px;height:1.4px;background:#c2c8c6"></div>
<div style="left:782.9px;top:716px;width:7.9px;height:15.8px;background:#6e7372;border:1px solid;border-color:#c2c8c6 #3a3f3e #3a3f3e #c2c8c6"></div>
<div style="left:787.2px;top:732px;width:1.0px;height:3px;background:#f0f0f0"></div>
<div style="left:822px;top:730.2px;width:1px;height:4.8px;background:#f0f0f0"></div>
<div style="left:856.5px;top:730.2px;width:1.0px;height:4.8px;background:#f0f0f0"></div>
<div style="left:891.5px;top:730.2px;width:1.0px;height:4.8px;background:#f0f0f0"></div>
<div style="left:925.5px;top:730.2px;width:1.0px;height:4.8px;background:#f0f0f0"></div>
<div style="left:960.5px;top:730.2px;width:1.0px;height:4.8px;background:#f0f0f0"></div>
<div style="left:994.5px;top:730.2px;width:1.0px;height:4.8px;background:#f0f0f0"></div>
<div style="left:1029.5px;top:730.2px;width:1.0px;height:4.8px;background:#f0f0f0"></div>
<div style="left:1063.5px;top:730.2px;width:1.0px;height:4.8px;background:#f0f0f0"></div>
<div style="left:1098.5px;top:730.2px;width:1.0px;height:4.8px;background:#f0f0f0"></div>
<div class="t" style="left:783.60px;top:736.40px;font-size:9.2px;line-height:9.2px;color:#f0f0f0;letter-spacing:-0.398px;transform:scaleY(1.0627);transform-origin:0 7.600px;">1.00</div>
<div class="t" style="left:1085.50px;top:736.40px;font-size:9.2px;line-height:9.2px;color:#f0f0f0;letter-spacing:-0.331px;transform:scaleY(1.0627);transform-origin:0 7.600px;">10.0</div>
<div class="t" style="left:784.50px;top:760.70px;font-size:12.6px;line-height:12.6px;color:#eceeed;letter-spacing:0.082px;transform:scaleY(1.1085);transform-origin:0 10.300px;">Select Theme:</div>
<div style="left:785.2px;top:774.4px;width:315.8px;height:22.8px;background:#5a6160;border:1px solid;border-color:#3a3f3e #c2c8c6 #c2c8c6 #3a3f3e"></div>
<div class="t" style="left:791.00px;top:780.70px;font-size:12.6px;line-height:12.6px;color:#eceeed;letter-spacing:-0.212px;transform:scaleY(1.1085);transform-origin:0 10.300px;">ThinGrey</div>
<svg style="position:absolute;left:1087.5px;top:785px;" width="8" height="5" viewBox="0 0 8 5"><path d="M0 0H8L4 4.5Z" fill="#d8dcda"/></svg>
<div style="left:1105px;top:794px;width:2px;height:2px;background:#a8aeac"></div>
<div style="left:1102px;top:797px;width:2px;height:2px;background:#a8aeac"></div>
<div style="left:1105px;top:797px;width:2px;height:2px;background:#a8aeac"></div>
<div style="left:1099px;top:800px;width:2px;height:2px;background:#a8aeac"></div>
<div style="left:1102px;top:800px;width:2px;height:2px;background:#a8aeac"></div>
<div style="left:1105px;top:800px;width:2px;height:2px;background:#a8aeac"></div>
<div style="left:1113.3px;top:446px;width:339.9px;height:363px;background:#292d32;border:1px solid #10151c;border-top-color:#1b2b3d"></div>
<div style="left:1114.3px;top:447px;width:337.9px;height:29px;background:linear-gradient(#232933,#282c33)"></div>
<div class="t" style="left:1138.30px;top:457.60px;font-size:10.8px;line-height:10.8px;color:#9ca0a6;letter-spacing:-0.180px;transform:scaleY(1.1639);transform-origin:0 9.400px;">About XGUI</div>
<div style="left:1392px;top:466px;width:8.1px;height:1.3px;background:#c8c8c8"></div>
<div style="left:1411px;top:458px;width:10px;height:9.2px;border:1px solid #c8c8c8;border-top-width:2px"></div>
<svg style="position:absolute;left:1431px;top:457.8px;" width="10.5" height="9.5" viewBox="0 0 10.5 9.5"><path d="M0.5 0.5L10 9M10 0.5L0.5 9" stroke="#d0d0d0" stroke-width="1.3"/></svg>
<div style="left:1118px;top:475.8px;width:64.2px;height:22.2px;background:linear-gradient(#4b525c,#2f343b)"></div>
<div style="left:1183.8px;top:476.3px;width:64.2px;height:19.5px;background:#343a42"></div>
<div style="left:1249.8px;top:476.3px;width:64.2px;height:19.5px;background:#343a42"></div>
<div style="left:1182.2px;top:498px;width:265.8px;height:1px;background:#4c5159"></div>
<div class="t" style="left:1123.30px;top:481.60px;font-size:10.8px;line-height:10.8px;color:#f0f0f0;letter-spacing:-0.119px;transform:scaleY(1.1639);transform-origin:0 9.400px;">Controls</div>
<div class="t" style="left:1188.90px;top:479.60px;font-size:10.8px;line-height:10.8px;color:#e6e6e6;letter-spacing:-0.061px;transform:scaleY(1.1639);transform-origin:0 9.400px;">About</div>
<div class="t" style="left:1255.00px;top:479.60px;font-size:10.8px;line-height:10.8px;color:#e6e6e6;letter-spacing:-0.158px;transform:scaleY(1.1639);transform-origin:0 9.400px;">Themes</div>
<div style="left:1118px;top:499px;width:330.2px;height:249.8px;background:linear-gradient(#2a2e33,#363a40)"></div>
<div style="left:1123px;top:504px;width:15px;height:15px;border:1px solid #5f6469"></div>
<div class="t" style="left:1145.90px;top:505.60px;font-size:10.8px;line-height:10.8px;color:#c8ccd0;letter-spacing:-0.121px;transform:scaleY(1.1639);transform-origin:0 9.400px;">CheckBox</div>
<div style="left:1123px;top:528px;width:41px;height:23.8px;background:linear-gradient(#444a53,#343940)"></div>
<div class="t" style="left:1128.20px;top:534.60px;font-size:10.8px;line-height:10.8px;color:#eaeaea;letter-spacing:-0.162px;transform:scaleY(1.1639);transform-origin:0 9.400px;">Button</div>
<div style="left:1123px;top:560px;width:14.8px;height:23.7px;border:1px solid #50555b"></div>
<div style="left:1123px;top:592px;width:62.8px;height:23.3px;background:linear-gradient(#444a53,#343940)"></div>
<div class="t" style="left:1128.20px;top:598.60px;font-size:10.8px;line-height:10.8px;color:#d8dadc;letter-spacing:-0.087px;transform:scaleY(1.1639);transform-origin:0 9.400px;">ComboBox</div>
<div style="left:1167.3px;top:596px;width:1.0px;height:16px;background:#595e66"></div>
<svg style="position:absolute;left:1173px;top:603px;" width="8" height="5" viewBox="0 0 8 5"><path d="M0 0H8L4 4.5Z" fill="#b8b8b8"/></svg>
<div class="t" style="left:1123.00px;top:634.60px;font-size:10.8px;line-height:10.8px;color:#d8dadc;letter-spacing:-0.057px;transform:scaleY(1.1639);transform-origin:0 9.400px;">There's meant to be radio buttons here, but they're not</div>
<div class="t" style="left:1123.00px;top:649.60px;font-size:10.8px;line-height:10.8px;color:#d8dadc;letter-spacing:-0.087px;transform:scaleY(1.1639);transform-origin:0 9.400px;">implemented yet</div>
<div style="left:1123px;top:674px;width:7.8px;height:15.8px;background:#b4b8be"></div>
<div style="left:1154.2px;top:680.5px;width:1.0px;height:4.5px;background:#e0e0e0"></div>
<div style="left:1182.3px;top:680.5px;width:1.0px;height:4.5px;background:#e0e0e0"></div>
<div style="left:1209.3px;top:680.5px;width:1.0px;height:4.5px;background:#e0e0e0"></div>
<div style="left:1237.4px;top:680.5px;width:1.0px;height:4.5px;background:#e0e0e0"></div>
<div style="left:1264.3px;top:680.5px;width:1.0px;height:4.5px;background:#e0e0e0"></div>
<div style="left:1292.5px;top:680.5px;width:1.0px;height:4.5px;background:#e0e0e0"></div>
<div style="left:1319.4px;top:680.5px;width:1.0px;height:4.5px;background:#e0e0e0"></div>
<div style="left:1347.5px;top:680.5px;width:1.0px;height:4.5px;background:#e0e0e0"></div>
<div style="left:1374.5px;top:680.5px;width:1.0px;height:4.5px;background:#e0e0e0"></div>
<div class="t" style="left:1123.00px;top:692.70px;font-size:8.6px;line-height:8.6px;color:#c8ccd0;letter-spacing:-0.909px;transform:scaleY(0.9744);transform-origin:0 7.300px;">1.00</div>
<div class="t" style="left:1364.00px;top:692.70px;font-size:8.6px;line-height:8.6px;color:#c8ccd0;letter-spacing:-0.909px;transform:scaleY(0.9744);transform-origin:0 7.300px;">10.0</div>
<div style="left:1395px;top:670px;width:48px;height:23.8px;border:1px solid #4c5158;background:#2a2e34"></div>
<div style="left:1123px;top:713.8px;width:7.8px;height:15.8px;background:#b4b8be"></div>
<div style="left:1162.4px;top:720.3px;width:1.0px;height:4.5px;background:#e0e0e0"></div>
<div style="left:1196.4px;top:720.3px;width:1.0px;height:4.5px;background:#e0e0e0"></div>
<div style="left:1231.5px;top:720.3px;width:1.0px;height:4.5px;background:#e0e0e0"></div>
<div style="left:1265.5px;top:720.3px;width:1.0px;height:4.5px;background:#e0e0e0"></div>
<div style="left:1300.2px;top:720.3px;width:1.0px;height:4.5px;background:#e0e0e0"></div>
<div style="left:1334.2px;top:720.3px;width:1.0px;height:4.5px;background:#e0e0e0"></div>
<div style="left:1369.3px;top:720.3px;width:1.0px;height:4.5px;background:#e0e0e0"></div>
<div style="left:1403.3px;top:720.3px;width:1.0px;height:4.5px;background:#e0e0e0"></div>
<div style="left:1438.4px;top:720.3px;width:1.0px;height:4.5px;background:#e0e0e0"></div>
<div class="t" style="left:1123.00px;top:732.70px;font-size:8.6px;line-height:8.6px;color:#c8ccd0;letter-spacing:-0.909px;transform:scaleY(0.9744);transform-origin:0 7.300px;">1.00</div>
<div class="t" style="left:1428.40px;top:732.70px;font-size:8.6px;line-height:8.6px;color:#c8ccd0;letter-spacing:-0.909px;transform:scaleY(0.9744);transform-origin:0 7.300px;">10.0</div>
<div class="t" style="left:1126.00px;top:759.60px;font-size:10.8px;line-height:10.8px;color:#e6e6e6;letter-spacing:-0.087px;transform:scaleY(1.1639);transform-origin:0 9.400px;">Select Theme:</div>
<div style="left:1126px;top:772px;width:314px;height:23.7px;background:linear-gradient(#40464f,#353a41)"></div>
<div class="t" style="left:1130.80px;top:778.60px;font-size:10.8px;line-height:10.8px;color:#c8ccd0;letter-spacing:-0.004px;transform:scaleY(1.1639);transform-origin:0 9.400px;">Vapour</div>
<div style="left:1421.5px;top:776px;width:1.0px;height:15.8px;background:#50555c"></div>
<svg style="position:absolute;left:1426.8px;top:782px;" width="7.6" height="4.5" viewBox="0 0 7.6 4.5"><path d="M0 0H7.6L3.8 4.3Z" fill="#c4c4c4"/></svg>
<div style="left:1444px;top:792px;width:2px;height:2px;background:#c8c8c8"></div>
<div style="left:1440px;top:796px;width:2px;height:2px;background:#c8c8c8"></div>
<div style="left:1444px;top:796px;width:2px;height:2px;background:#c8c8c8"></div>
<div style="left:1436px;top:800px;width:2px;height:2px;background:#c8c8c8"></div>
<div style="left:1440px;top:800px;width:2px;height:2px;background:#c8c8c8"></div>
<div style="left:1444px;top:800px;width:2px;height:2px;background:#c8c8c8"></div></div></body></html>
